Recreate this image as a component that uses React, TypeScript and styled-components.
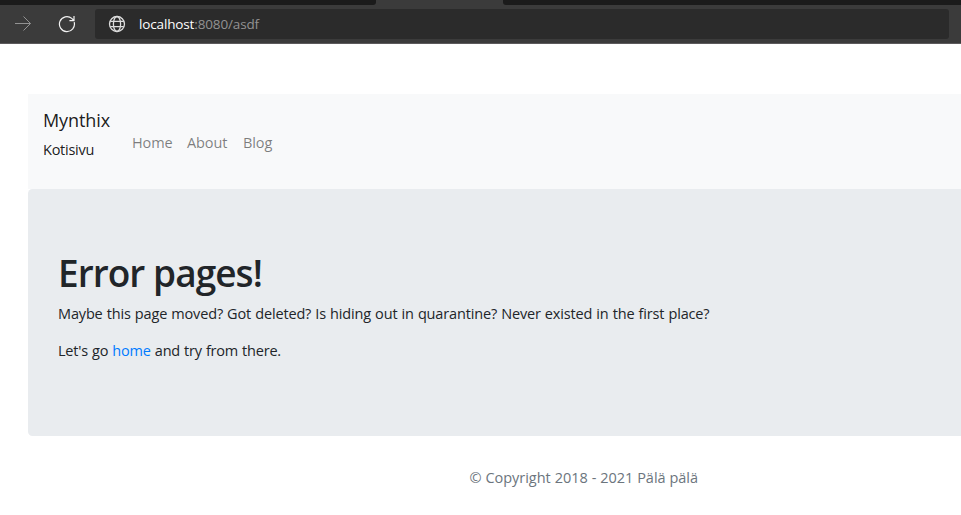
import React from "react";
import styled, { createGlobalStyle } from "styled-components";

const GlobalStyle = createGlobalStyle`
  *, *::before, *::after { box-sizing: border-box; }
  body {
    margin: 0;
    overflow: hidden;
    background: #fff;
    color: #212529;
    font: 400 14.5px/22px "Open Sans", "Noto Sans", sans-serif;
  }
  h1, p { margin: 0; }
  a { text-decoration: none; }
`;

const Page = styled.div`
  height: 515px;
  overflow: hidden;
`;

const TabStrip = styled.div`
  display: flex;
  justify-content: space-between;
  height: 5px;
  background: #3b3b3b;
`;

const InactiveTabs = styled.div<{ $width: number; $side: "left" | "right" }>`
  width: ${(p) => p.$width}px;
  background: #1b1b1b;
  border-radius: ${(p) => (p.$side === "left" ? "0 0 3px 0" : "0 0 0 3px")};
`;

const Toolbar = styled.div`
  display: flex;
  align-items: flex-start;
  height: 39px;
  padding: 4px 12px 0 14px;
  background: #3b3b3b;
  border-bottom: 1px solid #5c5a5c;
`;

const ToolButton = styled.span<{ $gap: number; $color: string }>`
  display: flex;
  align-items: center;
  width: 18px;
  height: 30px;
  margin-right: ${(p) => p.$gap}px;
  color: ${(p) => p.$color};
`;

const Glyph = styled.svg`
  display: block;
  flex: none;
  fill: none;
  stroke: currentColor;
`;

const AddressBar = styled.div`
  display: flex;
  flex: 1;
  align-items: center;
  height: 30px;
  padding-left: 13px;
  border-radius: 3px;
  background: #2b2b2b;
  color: #dcdcdc;
`;

const Url = styled.span`
  margin-left: 13px;
  color: #929292;
  font-size: 13.5px;
  letter-spacing: -0.14px;
  line-height: 20px;
`;

const Host = styled.span`
  color: #fff;
`;

const Content = styled.main`
  padding: 50px 0 0 28px;
`;

const Navbar = styled.nav`
  display: flex;
  height: 95px;
  padding: 12px 15px;
  background: #f8f9fa;
`;

const Brand = styled.a`
  width: 89px;
  color: rgba(0, 0, 0, 0.9);
`;

const BrandName = styled.div`
  font-size: 18px;
  letter-spacing: -0.1px;
  line-height: 28px;
`;

const BrandNote = styled.div`
  margin-top: 5px;
  letter-spacing: -0.25px;
`;

const NavLinks = styled.div`
  display: flex;
  gap: 15px;
  padding-top: 26px;
`;

const NavLink = styled.a<{ $width: number }>`
  width: ${(p) => p.$width}px;
  color: rgba(0, 0, 0, 0.5);
  letter-spacing: -0.1px;
`;

const Jumbotron = styled.section`
  height: 247px;
  padding: 61px 30px;
  border-radius: 4.5px 0 0 4.5px;
  background: #e9ecef;
`;

const Title = styled.h1`
  font-size: 37px;
  font-weight: 600;
  letter-spacing: -0.95px;
  line-height: 45px;
`;

const Paragraph = styled.p<{ $top: number; $tracking: number }>`
  margin-top: ${(p) => p.$top}px;
  letter-spacing: ${(p) => p.$tracking}px;
  word-spacing: 0.5px;
  white-space: nowrap;
`;

const HomeLink = styled.a`
  color: #007bff;
`;

const Footer = styled.footer`
  padding: 31px 0 0 441.5px;
  color: #6c757d;
  letter-spacing: -0.03px;
  word-spacing: 0.2px;
  white-space: nowrap;
`;

export default function App() {
  return (
    <Page>
      <GlobalStyle />
      <TabStrip>
        <InactiveTabs $width={376} $side="left" />
        <InactiveTabs $width={458} $side="right" />
      </TabStrip>
      <Toolbar>
        <ToolButton $gap={26} $color="#929292">
          <Glyph width="18" height="18" viewBox="0 0 18 18">
            <path d="M1 8.5h15.5M9.5 1.5l7 7-7 7" />
          </Glyph>
        </ToolButton>
        <ToolButton $gap={19} $color="#f2f2f2">
          <Glyph width="18" height="18" viewBox="0 0 18 18" strokeWidth="1.2">
            <path d="M16.2 7.2a7.5 7.5 0 1 1-2.4-3.8l1.8 1.9M16 1v4.7h-4.6" />
          </Glyph>
        </ToolButton>
        <AddressBar>
          <Glyph width="18" height="18" viewBox="0 0 18 18" strokeWidth="1.3">
            <circle cx="9" cy="9" r="7.5" />
            <ellipse cx="9" cy="9" rx="3.6" ry="7.5" />
            <path d="M2.2 6.3h13.6M2.2 11.7h13.6" />
          </Glyph>
          <Url>
            <Host>localhost</Host>:8080/asdf
          </Url>
        </AddressBar>
      </Toolbar>
      <Content>
        <Navbar>
          <Brand>
            <BrandName>Mynthix</BrandName>
            <BrandNote>Kotisivu</BrandNote>
          </Brand>
          <NavLinks>
            <NavLink $width={40}>Home</NavLink>
            <NavLink $width={41}>About</NavLink>
            <NavLink $width={30}>Blog</NavLink>
          </NavLinks>
        </Navbar>
        <Jumbotron>
          <Title>Error pages!</Title>
          <Paragraph $top={8} $tracking={-0.155}>
            Maybe this page moved? Got deleted? Is hiding out in quarantine? Never existed in the first place?
          </Paragraph>
          <Paragraph $top={15} $tracking={-0.2}>
            Let's go <HomeLink>home</HomeLink> and try from there.
          </Paragraph>
        </Jumbotron>
        <Footer>© Copyright 2018 - 2021 Pälä pälä</Footer>
      </Content>
    </Page>
  );
}
